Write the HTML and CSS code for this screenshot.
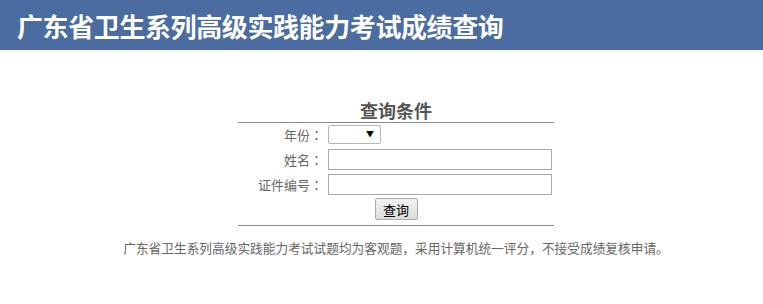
FILE: index.html
```html
<!DOCTYPE html>
<html lang="zh-CN">
<head>
	<meta charset="UTF-8">
	<title>广东省卫生系列高级实践能力考试成绩查询</title>
	<link rel="stylesheet" href="styles.css">
</head>
<body>

<div class="header">
	<h1>广东省卫生系列高级实践能力考试成绩查询</h1>
</div>

<div class="page">
	<form class="query">
		<h2>查询条件</h2>
		<div class="rows">
			<label class="label" for="year">年份<span class="colon" lang="zh-TW">：</span></label>
			<div class="select-wrap">
				<select id="year" class="select"><option></option></select>
				<span class="arrow">▼</span>
			</div>

			<label class="label" for="name">姓名<span class="colon" lang="zh-TW">：</span></label>
			<input id="name" class="input" type="text">

			<label class="label" for="cert">证件编号<span class="colon" lang="zh-TW">：</span></label>
			<input id="cert" class="input" type="text">
		</div>
		<div class="actions">
			<button type="button" class="btn">查询</button>
		</div>
	</form>
	<p class="note">广东省卫生系列高级实践能力考试试题均为客观题，采用计算机统一评分，不接受成绩复核申请。</p>
</div>

</body>
</html>
```

FILE: styles.css
```css
body {
	margin: 0;
	background: #fff;
	font-family: "Microsoft YaHei", "Noto Sans CJK SC", sans-serif;
	color: #666;
}

.header {
	background: #4a6ca0;
	height: 50px;
	padding-left: 17px;
}

.header h1 {
	margin: 0;
	font-size: 26px;
	line-height: 52px;
	font-weight: bold;
	color: #fff;
	letter-spacing: -0.4px;
}

.page {
	padding-left: 29px;
	padding-top: 48px;
}

.query {
	width: 316px;
	margin: 0 auto;
	border-bottom: 1px solid #888;
	padding-bottom: 5px;
}

.query h2 {
	margin: 0;
	font-size: 18px;
	line-height: 24px;
	text-align: center;
	color: #555;
	border-bottom: 1px solid #888;
}

.rows {
	display: grid;
	grid-template-columns: 85px 224px;
	column-gap: 5px;
	row-gap: 4px;
	align-items: center;
	padding-top: 1px;
}

.label {
	text-align: right;
	font-size: 13px;
	line-height: 21px;
	color: #666;
}

.colon {
	font-family: "Noto Sans CJK TC", sans-serif;
}

.select-wrap {
	position: relative;
	width: 53px;
	height: 19px;
}

.select {
	-webkit-appearance: none;
	appearance: none;
	display: block;
	box-sizing: border-box;
	width: 53px;
	height: 19px;
	margin: 0;
	padding: 0;
	border: 1px solid #b5b5b5;
	border-radius: 2px;
	background: #fff;
}

.arrow {
	position: absolute;
	right: 7px;
	top: 4px;
	font-size: 8px;
	line-height: 10px;
	color: #000;
	pointer-events: none;
}

.input {
	box-sizing: border-box;
	width: 224px;
	height: 21px;
	margin: 0;
	border: 1px solid #a9a9a9;
	padding: 0 2px;
}

.actions {
	display: flex;
	justify-content: center;
	padding-top: 3px;
}

.btn {
	width: 43px;
	height: 22px;
	padding: 0;
	font-family: "Microsoft YaHei", "Noto Sans CJK SC", sans-serif;
	font-size: 13px;
	color: #000;
	background: linear-gradient(#f2f2f2, #dcdcdc);
	border: 1px solid #adadad;
	border-radius: 2px;
}

.note {
	margin: 12px 0 0;
	text-align: center;
	font-size: 12.7px;
	color: #666;
}
```
